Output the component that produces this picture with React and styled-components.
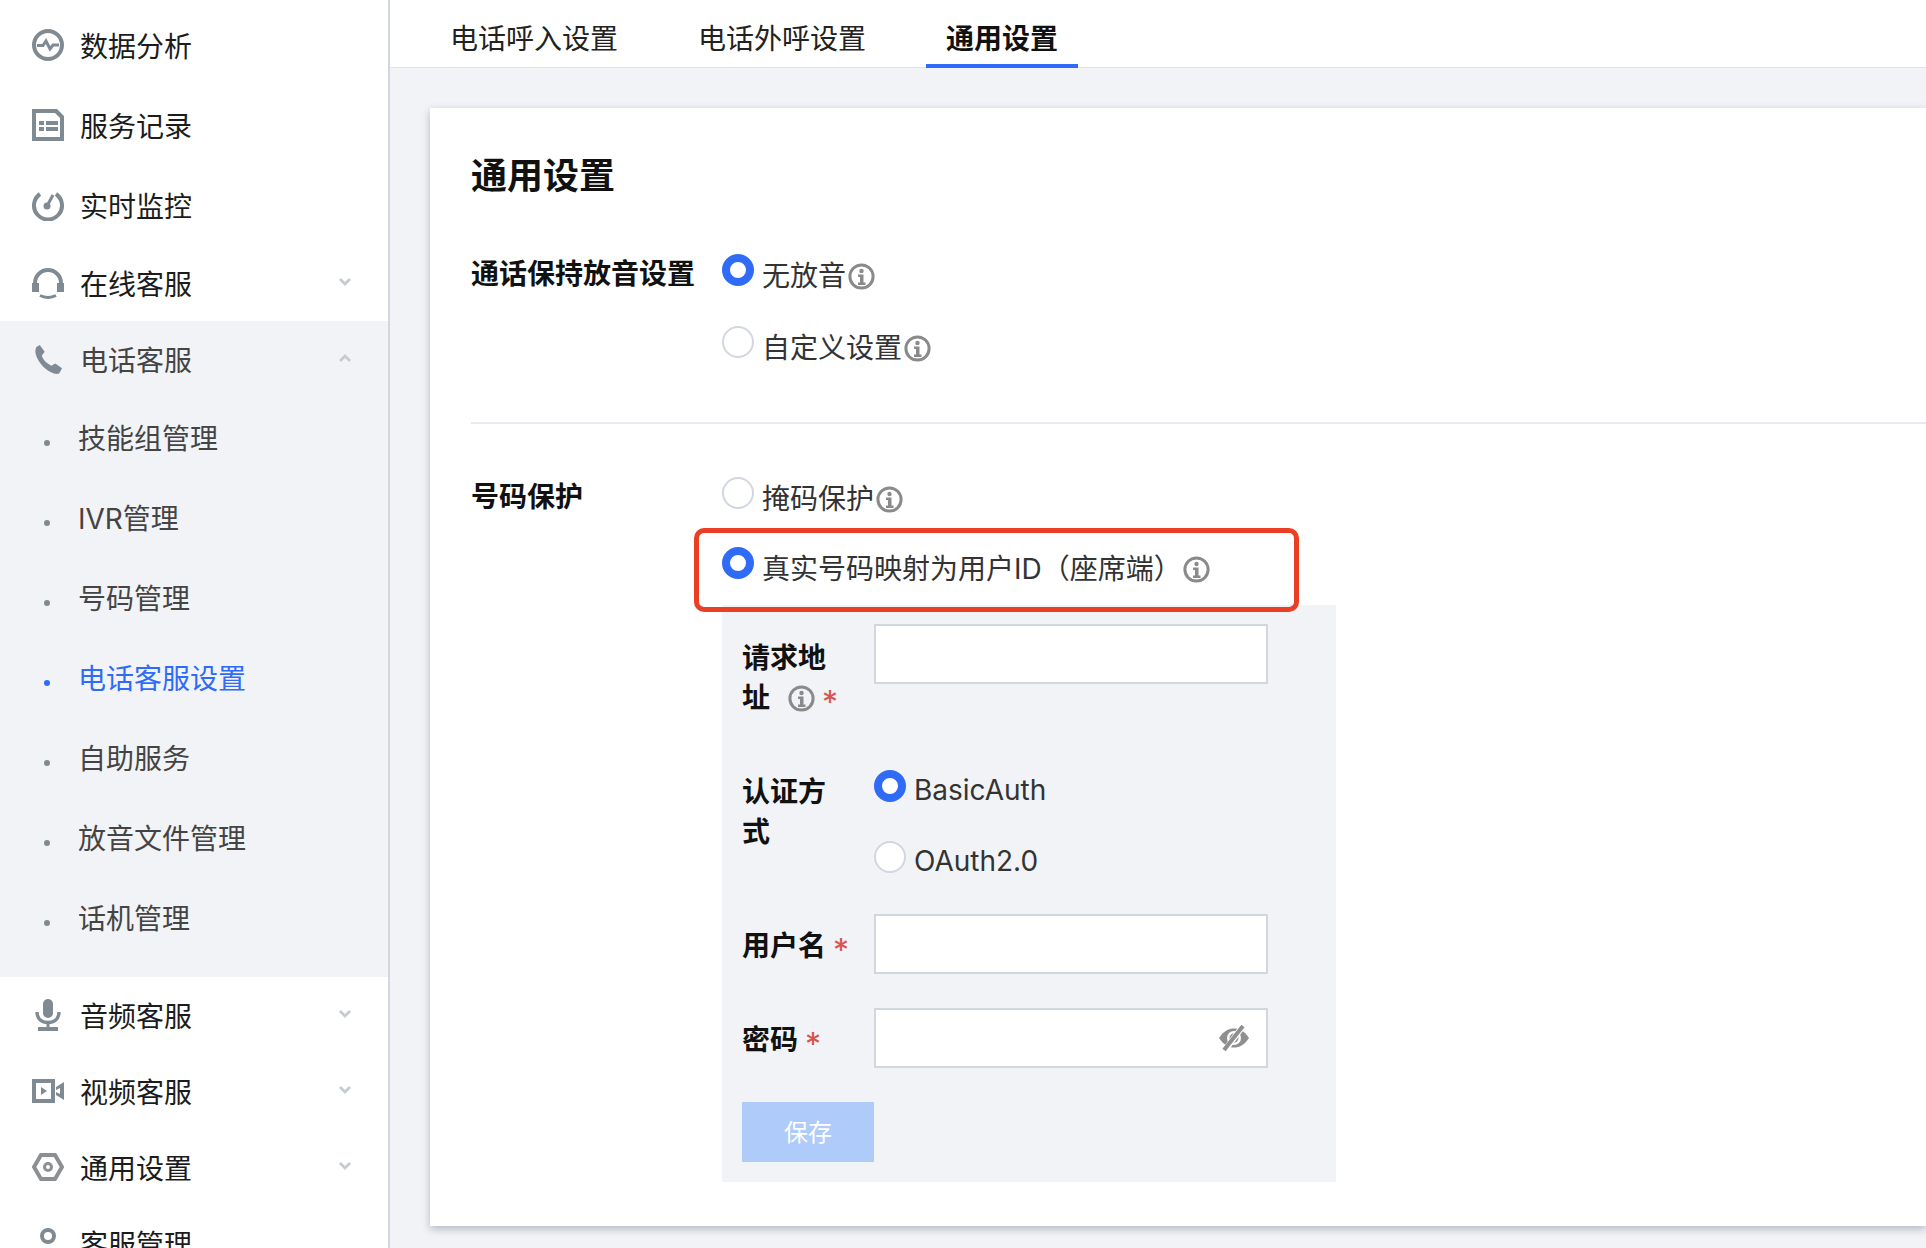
import React from "react";
import styled, { createGlobalStyle } from "styled-components";

const FONT = `Inter, "Noto Sans CJK SC", sans-serif`;

const Global = createGlobalStyle`
  html, body { margin: 0; padding: 0; height: 100%; overflow: hidden; background: #f2f3f7; }
  body { font-family: ${FONT}; }
  * { box-sizing: border-box; }
`;

const Page = styled.div`
  display: flex;
  width: 1926px;
  height: 1248px;
  overflow: hidden;
`;

const Sidebar = styled.aside`
  width: 390px;
  flex: none;
  height: 1248px;
  overflow: hidden;
  background: #fff;
  border-right: 2px solid #d2d6e0;
  padding-top: 5px;
`;

const NavRow = styled.div`
  display: flex;
  align-items: center;
  height: ${(p) => p.$h || 80}px;
  padding-left: 32px;
  padding-right: 37px;
  font-size: 28px;
  color: ${(p) => (p.$muted ? "#444" : "#1c1c1c")};
`;

const NavIcon = styled.span`
  display: flex;
  align-items: center;
  justify-content: center;
  width: 32px;
  height: 32px;
  flex: none;
  margin-right: 16px;
`;

const NavLabel = styled.span`
  flex: 1;
`;

const NavGroup = styled.div`
  background: #f2f3f7;
  padding-bottom: 20px;
`;

const SubRow = styled.div`
  display: flex;
  align-items: center;
  height: 80px;
  padding-left: 44px;
  font-size: 28px;
  color: ${(p) => (p.$active ? "#2f6bf6" : "#444")};
`;

const Dot = styled.span`
  width: 6px;
  height: 6px;
  border-radius: 50%;
  background: ${(p) => (p.$active ? "#2f6bf6" : "#7f8a93")};
  margin-right: 28px;
  margin-top: 11px;
`;

const Main = styled.main`
  flex: 1;
  min-width: 0;
  display: flex;
  flex-direction: column;
`;

const Tabs = styled.nav`
  display: flex;
  height: 68px;
  flex: none;
  background: #fff;
  border-bottom: 1px solid #dfe2e8;
  padding-left: 40px;
  gap: 40px;
`;

const Tab = styled.div`
  height: 68px;
  padding: 0 20px;
  font-size: 28px;
  line-height: 78px;
  color: ${(p) => (p.$active ? "#111" : "#222")};
  font-weight: ${(p) => (p.$active ? 700 : 400)};
  border-bottom: ${(p) => (p.$active ? "4px solid #2f6bf6" : "none")};
`;

const Content = styled.div`
  flex: 1;
  padding: 40px 0 0 40px;
`;

const Card = styled.section`
  height: 1118px;
  background: #fff;
  box-shadow: 0 3px 8px rgba(40, 45, 70, 0.3);
  padding: 45px 0 0 41px;
`;

const Title = styled.h2`
  margin: 0 0 55px;
  font-size: 36px;
  line-height: 46px;
  font-weight: 700;
  color: #111;
`;

const FormRow = styled.div`
  display: flex;
`;

const RowLabel = styled.div`
  width: 251px;
  flex: none;
  font-size: 28px;
  line-height: 40px;
  font-weight: 700;
  color: #111;
`;

const RowBody = styled.div`
  display: flex;
  flex-direction: column;
  align-items: flex-start;
  min-width: 0;
`;

const RadioRow = styled.div`
  display: flex;
  align-items: center;
  height: ${(p) => p.$h || 72}px;
  padding-top: ${(p) => p.$pt || 0}px;
  font-size: 28px;
  color: #333;
`;

const RadioMark = styled.span`
  display: block;
  width: 32px;
  height: 32px;
  flex: none;
  border-radius: 50%;
  background: #fff;
  border: ${(p) => (p.$on ? "8px solid #2f6bf6" : "2px solid #d2d6e0")};
  margin-right: 8px;
  margin-top: -8px;
`;

const Divider = styled.hr`
  border: 0;
  height: 2px;
  background: #e6e9ee;
  margin: 24px 0 53px;
`;

const Highlight = styled.div`
  position: absolute;
  left: -28px;
  top: 11px;
  width: 605px;
  height: 84px;
  border: 5px solid #ea3f25;
  border-radius: 10px;
  pointer-events: none;
  z-index: 1;
`;

const Anchor = styled.div`
  position: relative;
`;

const SubForm = styled.div`
  width: 614px;
  height: 577px;
  background: #f2f3f7;
  padding: 19px 0 0 20px;
`;

const SubRowForm = styled.div`
  display: flex;
  margin-bottom: ${(p) => p.$mb || 0}px;
`;

const SubLabel = styled.div`
  width: 108px;
  margin-right: 24px;
  flex: none;
  font-size: 28px;
  line-height: 40px;
  font-weight: 700;
  color: #111;
  padding-top: ${(p) => p.$pt || 0}px;
`;

const Star = styled.span`
  color: #d9534f;
  font-weight: 400;
  font-size: 32px;
  line-height: 0;
  vertical-align: -6px;
  margin-left: ${(p) => p.$ml || 7}px;
`;

const Input = styled.div`
  display: flex;
  align-items: center;
  justify-content: flex-end;
  width: 394px;
  height: 60px;
  background: #fff;
  border: 2px solid #d2d6e0;
  padding-right: 16px;
`;

const SaveButton = styled.button`
  display: block;
  width: 132px;
  height: 60px;
  border: 0;
  background: #aecbfa;
  color: #fff;
  font-family: ${FONT};
  font-size: 24px;
  padding: 0 0 3px;
`;

const InfoWrap = styled.svg`
  width: 27px;
  height: 27px;
  flex: none;
  margin-left: ${(p) => p.$ml || 2}px;
  margin-top: 5px;
  vertical-align: -4px;
`;

function Info(props) {
  return (
    <InfoWrap viewBox="0 0 27 27" {...props}>
      <circle cx="13.5" cy="13.5" r="11.6" fill="none" stroke="#8a8a8a" strokeWidth="3" />
      <circle cx="13.5" cy="8" r="2.2" fill="#8a8a8a" />
      <path d="M10 11.500h5.500v8h2v2.500h-7.500v-2.500h2v-5.500h-2z" fill="#8a8a8a" />
    </InfoWrap>
  );
}

const G = "#7f8a93";

const Pulse = () => (
  <svg width="32" height="32" viewBox="0 0 32 32">
    <circle cx="16" cy="16" r="14" fill="none" stroke={G} strokeWidth="4" />
    <path d="M5 16.500h6l3-4.500 4 8 3-4h6" fill="none" stroke={G} strokeWidth="3" />
  </svg>
);
const Doc = () => (
  <svg width="32" height="32" viewBox="0 0 32 32">
    <path d="M0 0h25l7 7v25H0z" fill={G} />
    <path d="M4 4h19l5 5v19H4z" fill="#fff" />
    <path d="M7 12h5v4H7zM14 12h12v4H14zM7 18h5v4H7zM14 18h12v4H14z" fill={G} />
  </svg>
);
const Gauge = () => (
  <svg width="32" height="32" viewBox="0 0 32 32">
    <path d="M8 5A14 14 0 1 0 24 5" fill="none" stroke={G} strokeWidth="4" />
    <circle cx="15" cy="17" r="3.500" fill={G} />
    <path d="M15 17L21 6" stroke={G} strokeWidth="3" />
  </svg>
);
const Headset = () => (
  <svg width="32" height="32" viewBox="0 0 32 32">
    <path d="M3 16A13 13 0 0 1 29 16" fill="none" stroke={G} strokeWidth="4" />
    <path d="M0 16h7v9H0zM25 16h7v9h-7z" fill={G} />
    <path d="M8 28.500q8 4 16 0" fill="none" stroke={G} strokeWidth="3" />
  </svg>
);
const Phone = () => (
  <svg width="31" height="31" viewBox="0 0 32 32">
    <path d="M7 1l5 7-3 4c1.500 4 5 8 10 10.500l4-2.500 7 5-3 5.500c-2 1-5 .5-9-1.500C11 25 5 18 3 11c-1-3-.5-6 .5-8z" fill={G} />
  </svg>
);
const Mic = () => (
  <svg width="32" height="32" viewBox="0 0 32 32">
    <rect x="11" y="0" width="10" height="19" rx="5" fill={G} />
    <path d="M5 13c0 7 5 10.500 11 10.500S27 20 27 13" fill="none" stroke={G} strokeWidth="3.400" />
    <path d="M14.500 23h3v5h-3zM6 28h20v4H6z" fill={G} />
  </svg>
);
const Video = () => (
  <svg width="32" height="32" viewBox="0 0 32 32">
    <path d="M2 6h19v20H2z" fill="none" stroke={G} strokeWidth="4" />
    <path d="M9 12l6 4-6 4zM24 12l8-5v18l-8-5v-3l4 2v-6l-4 2z" fill={G} />
  </svg>
);
const Hex = () => (
  <svg width="32" height="32" viewBox="0 0 32 32">
    <path d="M9 4h14l7 12-7 12H9L2 16z" fill="none" stroke="#8d8f91" strokeWidth="4" />
    <circle cx="16" cy="16" r="3.500" fill="none" stroke="#8d8f91" strokeWidth="3" />
  </svg>
);
const Person = () => (
  <svg width="32" height="32" viewBox="0 0 32 32">
    <circle cx="16" cy="9" r="6" fill="none" stroke={G} strokeWidth="4" />
  </svg>
);

const ChevronWrap = styled.svg`
  margin-top: -3px;
`;

const Chevron = ({ up }) => (
  <ChevronWrap width="12" height="8" viewBox="0 0 12 8">
    <path d={up ? "M1 7l5-5 5 5" : "M1 1l5 5 5-5"} fill="none" stroke="#c6cbd1" strokeWidth="2.800" />
  </ChevronWrap>
);

const EyeOff = () => (
  <svg width="32" height="26" viewBox="0 0 32 26">
    <path d="M1 13C6 5.500 11 3.500 16 3.500S26 5.500 31 13C26 20.500 21 22.500 16 22.500S6 20.500 1 13z" fill="#8f8f8f" />
    <circle cx="16" cy="13" r="7" fill="#fff" />
    <circle cx="16" cy="13" r="4.500" fill="#8f8f8f" />
    <path d="M7 25L25 1" stroke="#fff" strokeWidth="6" />
    <path d="M6 25L25 1" stroke="#8f8f8f" strokeWidth="4" />
  </svg>
);

function Item({ icon, label, chevron, muted, h }) {
  return (
    <NavRow $h={h} $muted={muted}>
      <NavIcon>{icon}</NavIcon>
      <NavLabel>{label}</NavLabel>
      {chevron && <Chevron up={chevron === "up"} />}
    </NavRow>
  );
}

const subItems = ["技能组管理", "IVR管理", "号码管理", "电话客服设置", "自助服务", "放音文件管理", "话机管理"];

export default function App() {
  return (
    <Page>
      <Global />
      <Sidebar>
        <Item icon={<Pulse />} label="数据分析" />
        <Item icon={<Doc />} label="服务记录" />
        <Item icon={<Gauge />} label="实时监控" />
        <Item icon={<Headset />} label="在线客服" chevron="down" h={76} />
        <NavGroup>
          <Item icon={<Phone />} label="电话客服" chevron="up" muted h={76} />
          {subItems.map((s) => (
            <SubRow key={s} $active={s === "电话客服设置"}>
              <Dot $active={s === "电话客服设置"} />
              {s}
            </SubRow>
          ))}
        </NavGroup>
        <Item icon={<Mic />} label="音频客服" chevron="down" h={76} />
        <Item icon={<Video />} label="视频客服" chevron="down" h={76} />
        <Item icon={<Hex />} label="通用设置" chevron="down" h={76} />
        <Item icon={<Person />} label="客服管理" h={76} />
      </Sidebar>
      <Main>
        <Tabs>
          <Tab>电话呼入设置</Tab>
          <Tab>电话外呼设置</Tab>
          <Tab $active>通用设置</Tab>
        </Tabs>
        <Content>
          <Card>
            <Title>通用设置</Title>
            <FormRow>
              <RowLabel>通话保持放音设置</RowLabel>
              <RowBody>
                <RadioRow $h={40}>
                  <RadioMark $on />
                  无放音
                  <Info />
                </RadioRow>
                <RadioRow $h={104}>
                  <RadioMark />
                  自定义设置
                  <Info />
                </RadioRow>
              </RowBody>
            </FormRow>
            <Divider />
            <FormRow>
              <RowLabel>号码保护</RowLabel>
              <RowBody>
                <RadioRow $h={40}>
                  <RadioMark />
                  掩码保护
                  <Info />
                </RadioRow>
                <Anchor>
                  <Highlight />
                  <RadioRow $h={88} $pt={11}>
                    <RadioMark $on />
                    真实号码映射为用户ID（座席端）
                    <Info $ml={1} />
                  </RadioRow>
                </Anchor>
                <SubForm>
                  <SubRowForm $mb={52}>
                    <SubLabel $pt={14}>
                      请求地址
                      <Info $ml={18} />
                      <Star>*</Star>
                    </SubLabel>
                    <Input />
                  </SubRowForm>
                  <SubRowForm $mb={2}>
                    <SubLabel $pt={2}>认证方式</SubLabel>
                    <RowBody>
                      <RadioRow $h={40}>
                        <RadioMark $on />
                        BasicAuth
                      </RadioRow>
                      <RadioRow $h={102}>
                        <RadioMark />
                        OAuth2.0
                      </RadioRow>
                    </RowBody>
                  </SubRowForm>
                  <SubRowForm $mb={34}>
                    <SubLabel $pt={12}>
                      用户名
                      <Star>*</Star>
                    </SubLabel>
                    <Input />
                  </SubRowForm>
                  <SubRowForm $mb={34}>
                    <SubLabel $pt={12}>
                      密码
                      <Star>*</Star>
                    </SubLabel>
                    <Input>
                      <EyeOff />
                    </Input>
                  </SubRowForm>
                  <SaveButton>保存</SaveButton>
                </SubForm>
              </RowBody>
            </FormRow>
          </Card>
        </Content>
      </Main>
    </Page>
  );
}
